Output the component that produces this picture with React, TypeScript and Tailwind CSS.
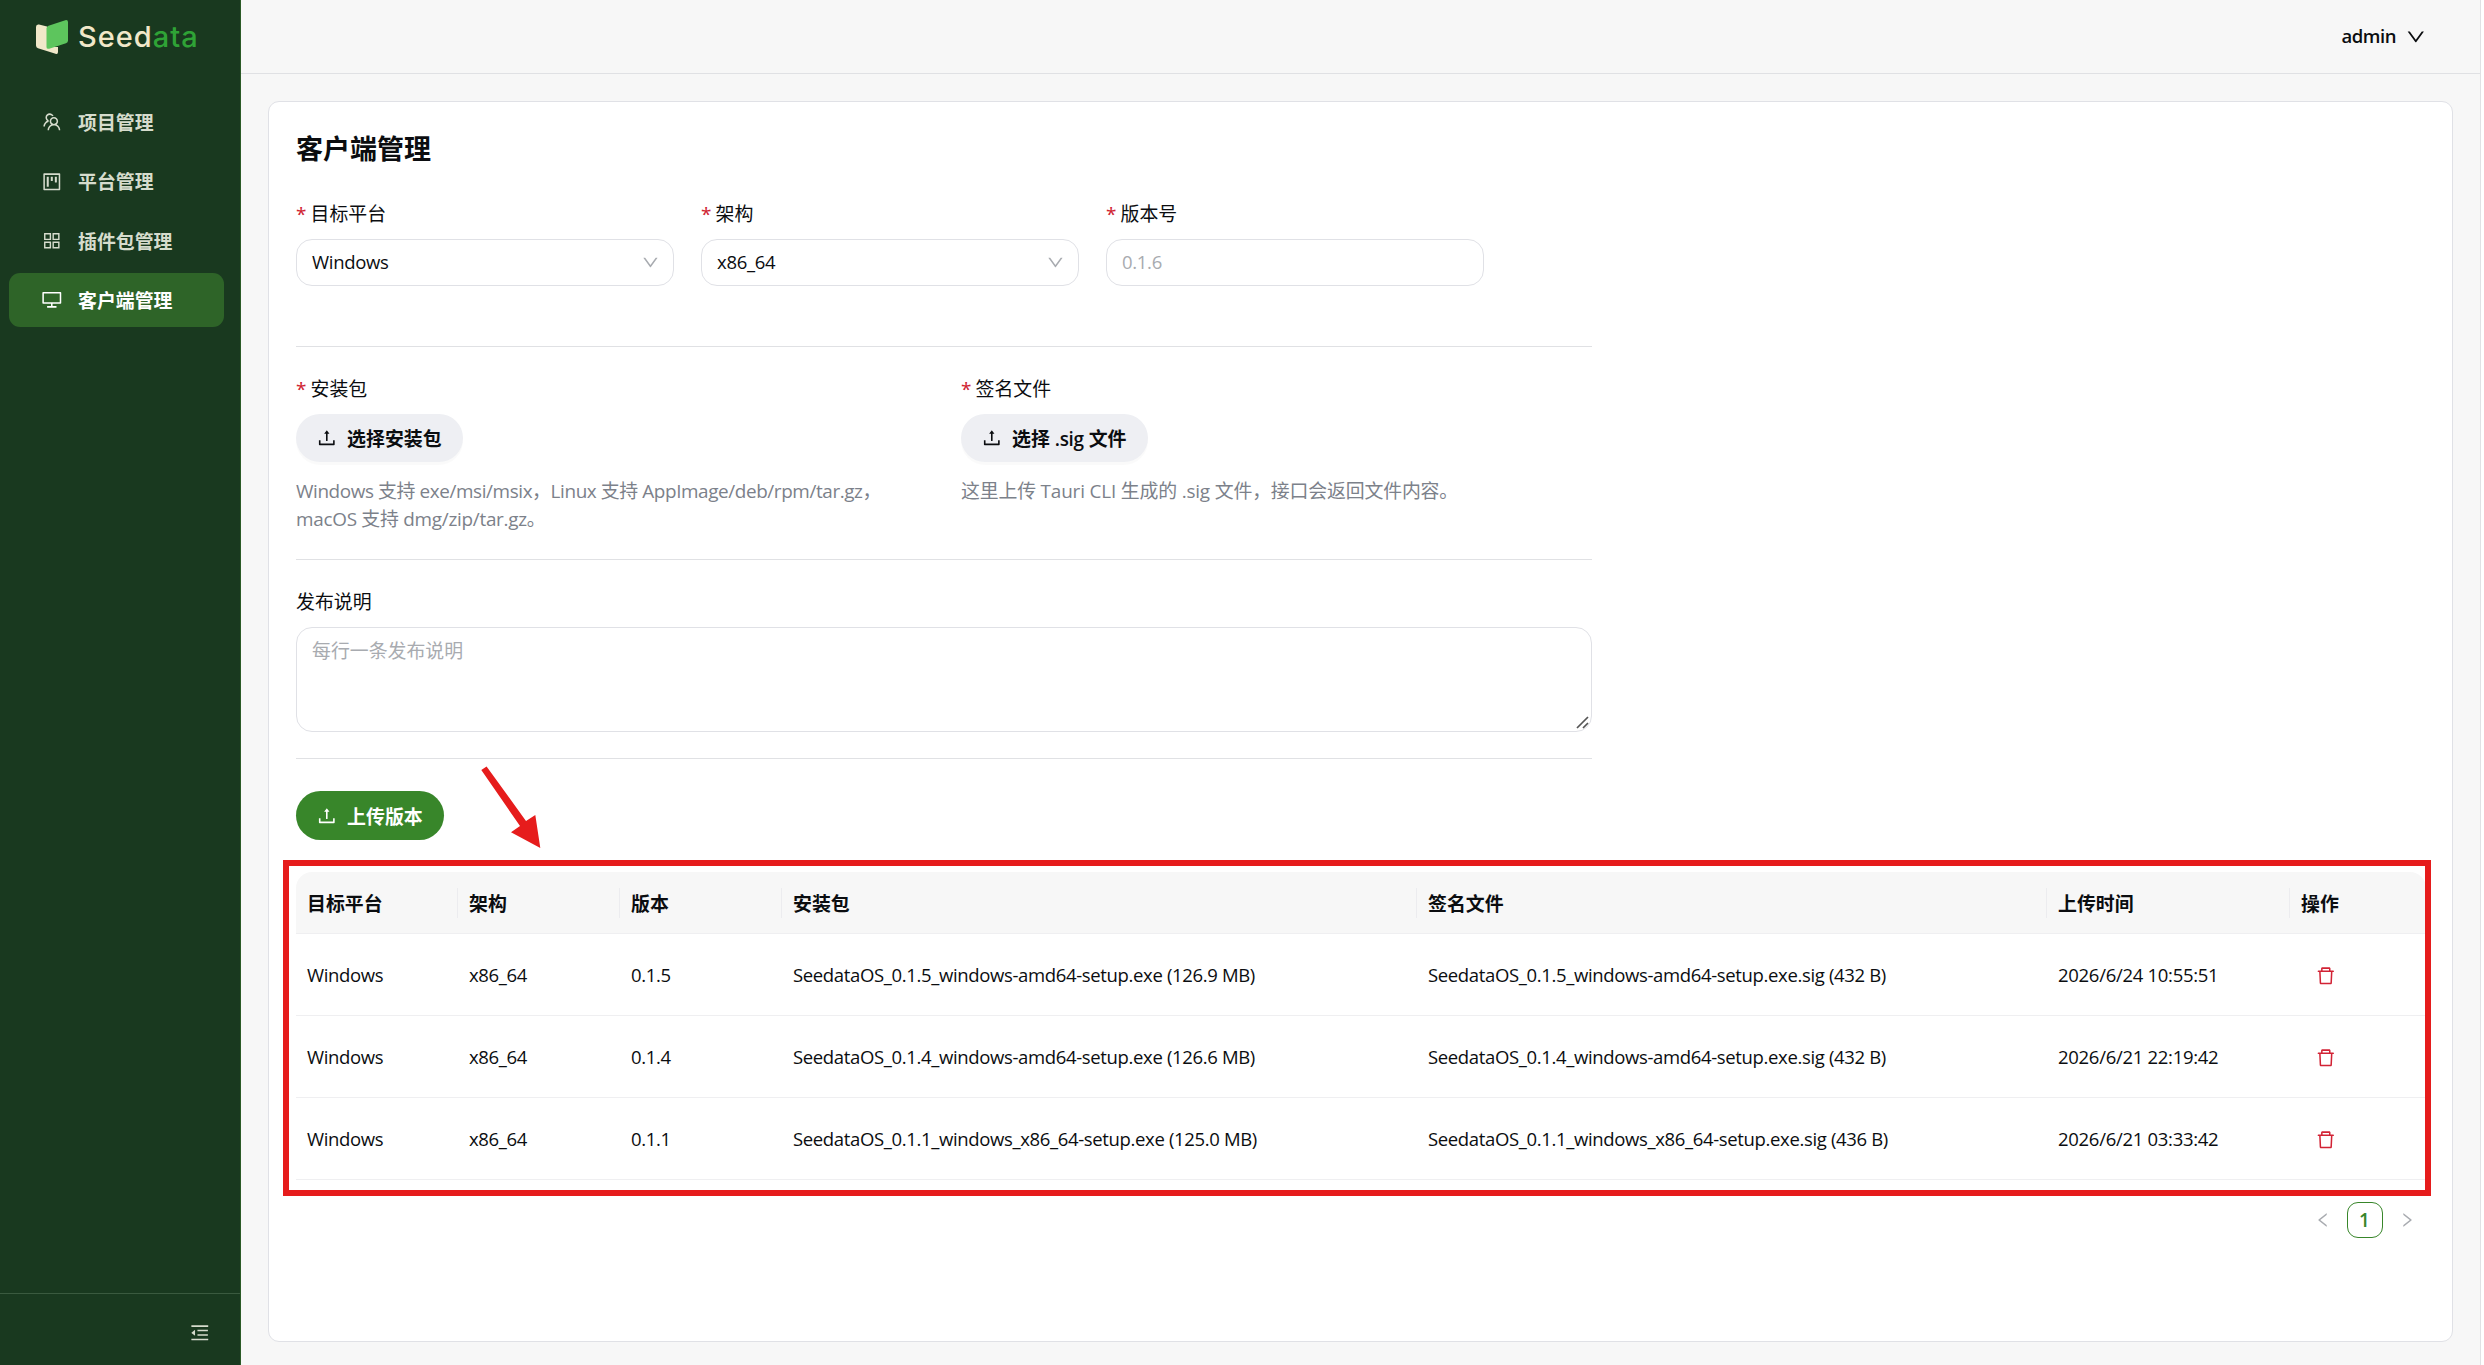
import React from "react";
import {
  AiOutlineTeam,
  AiOutlineProject,
  AiOutlineAppstore,
  AiOutlineDesktop,
  AiOutlineUpload,
  AiOutlineDown,
  AiOutlineDelete,
  AiOutlineMenuFold,
  AiOutlineLeft,
  AiOutlineRight,
} from "react-icons/ai";

const menu = [
  { label: "项目管理", Icon: AiOutlineTeam, active: false },
  { label: "平台管理", Icon: AiOutlineProject, active: false },
  { label: "插件包管理", Icon: AiOutlineAppstore, active: false },
  { label: "客户端管理", Icon: AiOutlineDesktop, active: true },
];

const columns = ["目标平台", "架构", "版本", "安装包", "签名文件", "上传时间", "操作"];

const rows = [
  {
    version: "0.1.5",
    pkg: "SeedataOS_0.1.5_windows-amd64-setup.exe (126.9 MB)",
    sig: "SeedataOS_0.1.5_windows-amd64-setup.exe.sig (432 B)",
    time: "2026/6/24 10:55:51",
  },
  {
    version: "0.1.4",
    pkg: "SeedataOS_0.1.4_windows-amd64-setup.exe (126.6 MB)",
    sig: "SeedataOS_0.1.4_windows-amd64-setup.exe.sig (432 B)",
    time: "2026/6/21 22:19:42",
  },
  {
    version: "0.1.1",
    pkg: "SeedataOS_0.1.1_windows_x86_64-setup.exe (125.0 MB)",
    sig: "SeedataOS_0.1.1_windows_x86_64-setup.exe.sig (436 B)",
    time: "2026/6/21 03:33:42",
  },
];

const gridCols = "grid grid-cols-[162px_162px_162px_635px_630px_243px_136px]";

function Logo() {
  return (
    <div className="flex h-[73px] items-center pl-9">
      <svg width="32" height="34" viewBox="0 0 32 34" className="shrink-0">
        <path d="M0 7q0-3 3-2.400L11 6.500V27h11v5q0 2.600-2.500 1.800L2 28.200q-2-.6-2-2.700Z" fill="#f1e8c9" />
        <path d="M10.500 8.500q0-2 2-2.700L29.300.2Q32-.4 32 2v18.500q0 2-2 2.700L13.200 28.700q-2.700.7-2.700-1.700Z" fill="#5dc55d" />
      </svg>
      <span className="ml-[10px] pb-px font-['Inter'] text-[29px] leading-none font-medium tracking-[1px] text-[#f1e8c9]">
        Seed<span className="text-[#2fa336]">ata</span>
      </span>
    </div>
  );
}

function Sidebar() {
  return (
    <aside className="flex w-[241px] shrink-0 flex-col border-r border-[#2b5a27] bg-[#19391f]">
      <Logo />
      <nav className="mt-[22px] flex flex-col gap-[5.300px] pr-4 pl-[9px]">
        {menu.map(({ label, Icon, active }) => (
          <a
            key={label}
            className={
              active
                ? "flex h-[54px] items-center rounded-[11px] bg-[#2e6428] pl-8 font-bold text-white"
                : "flex h-[54px] items-center rounded-[11px] pl-8 font-bold text-[#d6dccd]"
            }
          >
            <Icon className="size-[21.600px]" />
            <span className="ml-[15.400px] pt-0.5">{label}</span>
          </a>
        ))}
      </nav>
      <div className="mt-auto flex h-[72px] items-center justify-end border-t border-[#3a5a3f] pr-[29px] pt-1.5 text-[#d6dccd]">
        <AiOutlineMenuFold className="size-[21.600px]" />
      </div>
    </aside>
  );
}

function Label({ children, required = true }: { children: React.ReactNode; required?: boolean }) {
  return (
    <div className="flex h-[30px] items-center pt-0.5">
      {required && <span className="mr-[3.500px] w-[11px] font-['Noto_Sans'] text-[#d02533]">*</span>}
      <span>{children}</span>
    </div>
  );
}

function Select({ label, value }: { label: string; value: string }) {
  return (
    <div className="w-[378px]">
      <Label>{label}</Label>
      <div className="mt-[11px] flex h-[47px] items-center justify-between rounded-[16px] border border-[#e0e1e6] pr-[13.500px] pl-[15px]">
        <span className="pb-0.5 text-[18.500px] tracking-[-0.3px]">{value}</span>
        <AiOutlineDown className="size-[18.900px] text-[#a8abb0]" />
      </div>
    </div>
  );
}

function UploadButton({ children }: { children: React.ReactNode }) {
  return (
    <button className="flex h-12 items-center rounded-full bg-[#eeeff3] pr-[21.500px] pl-5 font-bold shadow-[0_3px_0_rgba(0,0,0,0.02)]">
      <AiOutlineUpload className="mr-[9.500px] size-[21.600px]" />
      <span className="pt-0.5">{children}</span>
    </button>
  );
}

export default function App() {
  return (
    <div className="flex h-[1365px] w-[2484px] bg-white font-['Open_Sans','Noto_Sans_CJK_SC',sans-serif] text-[18.900px] leading-[28px] text-[#0b0d10]">
      <Sidebar />
      <div className="flex w-[2240px] flex-col border-r border-[#e0e1e4] bg-[#f7f7f7]">
        <header className="flex h-[74px] items-center justify-end border-b border-[#e0e1e4] pr-[53px]">
          <span className="pb-0.5 text-[18.500px] font-semibold tracking-[-0.5px]">admin</span>
          <AiOutlineDown className="ml-[9.500px] size-[21.600px]" />
        </header>

        <main className="relative mt-[27px] ml-[27px] h-[1241px] w-[2185px] rounded-[11px] border border-[#e0e1e6] bg-white pl-[27px]">
          <h1 className="mt-[26px] text-[27px] leading-[42px] font-bold">客户端管理</h1>

          <section className="mt-[28px] flex w-[1296px] gap-[27px] border-b border-[#e0e1e4] pb-[60px]">
            <Select label="目标平台" value="Windows" />
            <Select label="架构" value="x86_64" />
            <div className="w-[378px]">
              <Label>版本号</Label>
              <div className="mt-[11px] flex h-[47px] items-center rounded-[16px] border border-[#e0e1e6] px-[15px] pb-0.5 text-[18.500px] tracking-[-0.3px] text-[#a8abb0]">
                0.1.6
              </div>
            </div>
          </section>

          <section className="flex h-[213px] w-[1296px] gap-[34px] border-b border-[#e0e1e4] pt-[26px]">
            <div className="w-[631px]">
              <Label>安装包</Label>
              <div className="mt-[11px] flex">
                <UploadButton>选择安装包</UploadButton>
              </div>
              <p className="mt-[15px] text-[#7c818a]">
                <span className="tracking-[-0.4px]">Windows 支持 exe/msi/msix，Linux 支持 AppImage/deb/rpm/tar.gz，</span>
                <br />
                <span className="tracking-[-0.27px]">macOS 支持 dmg/zip/tar.gz。</span>
              </p>
            </div>
            <div className="w-[631px]">
              <Label>签名文件</Label>
              <div className="mt-[11px] flex">
                <UploadButton>
                  选择 <span className="font-semibold tracking-[-0.3px]">.sig</span> 文件
                </UploadButton>
              </div>
              <p className="mt-[15px] tracking-[-0.17px] text-[#7c818a]">
                这里上传 Tauri CLI 生成的 .sig 文件，接口会返回文件内容。
              </p>
            </div>
          </section>

          <section className="h-[199px] w-[1296px] border-b border-[#e0e1e4] pt-[26px]">
            <Label required={false}>发布说明</Label>
            <div className="relative mt-[11px] h-[105px] rounded-[16px] border border-[#e0e1e6] px-[15px] pt-[9px] text-[#a8abb0]">
              每行一条发布说明
              <svg className="absolute right-0.5 bottom-0.5" width="13" height="13" viewBox="0 0 13 13" stroke="#555" strokeWidth="1.700">
                <path d="M1 12 12 1M7 12l5-5" />
              </svg>
            </div>
          </section>

          <button className="mt-8 flex h-[49px] items-center rounded-full bg-[#38862a] pr-[21.500px] pl-5 font-bold text-white">
            <AiOutlineUpload className="mr-[9.500px] size-[21.600px]" />
            <span className="pt-0.5">上传版本</span>
          </button>

          <div className="mt-8 w-[2130px]">
            <div className={`${gridCols} h-[62px] items-center rounded-t-[16px] border-b border-[#efeff1] bg-[#f7f7f7] font-bold`}>
              {columns.map((c, i) => (
                <div
                  key={c}
                  className={
                    i < 6
                      ? "flex h-[30px] items-center border-r border-[#ececef] pt-0.5 pl-[11px]"
                      : "flex h-[30px] items-center pt-0.5 pl-[11px]"
                  }
                >
                  {c}
                </div>
              ))}
            </div>
            {rows.map((r) => (
              <div
                key={r.version}
                className={`${gridCols} h-[82px] items-center border-b border-[#efeff1] text-[18.500px] tracking-[-0.35px] whitespace-nowrap`}
              >
                <div className="pl-[11px]">Windows</div>
                <div className="pl-[11px]">x86_64</div>
                <div className="pl-[11px]">{r.version}</div>
                <div className="pl-[11px]">{r.pkg}</div>
                <div className="pl-[11px]">{r.sig}</div>
                <div className="pl-[11px] tracking-[-0.29px]">{r.time}</div>
                <div className="pt-0.5 pl-[24.500px] text-[#d22335]">
                  <AiOutlineDelete className="size-[21.600px]" />
                </div>
              </div>
            ))}
          </div>

          <nav className="mt-[22px] flex h-9 w-[2130px] items-center justify-end pr-[10.500px] text-[#a8abb0]">
            <AiOutlineLeft className="size-[18px]" />
            <span className="mx-[15px] flex size-9 items-center justify-center rounded-[11px] border border-[#38862a] font-semibold text-[#38862a]">
              1
            </span>
            <AiOutlineRight className="size-[18px]" />
          </nav>

          {/* Highlight drawn over the version list */}
          <div className="absolute top-[758px] left-[14px] h-[336px] w-[2148px] border-[6px] border-[#e61c1c]" />
          <svg className="absolute top-[662px] left-[210px]" width="66" height="90" viewBox="479 764 66 90" fill="#e61c1c">
            <path d="M481.300 770 486.600 766.500 526 821 535.300 815 540.300 848 511 832.300 520 826Z" />
          </svg>
        </main>
      </div>
    </div>
  );
}
